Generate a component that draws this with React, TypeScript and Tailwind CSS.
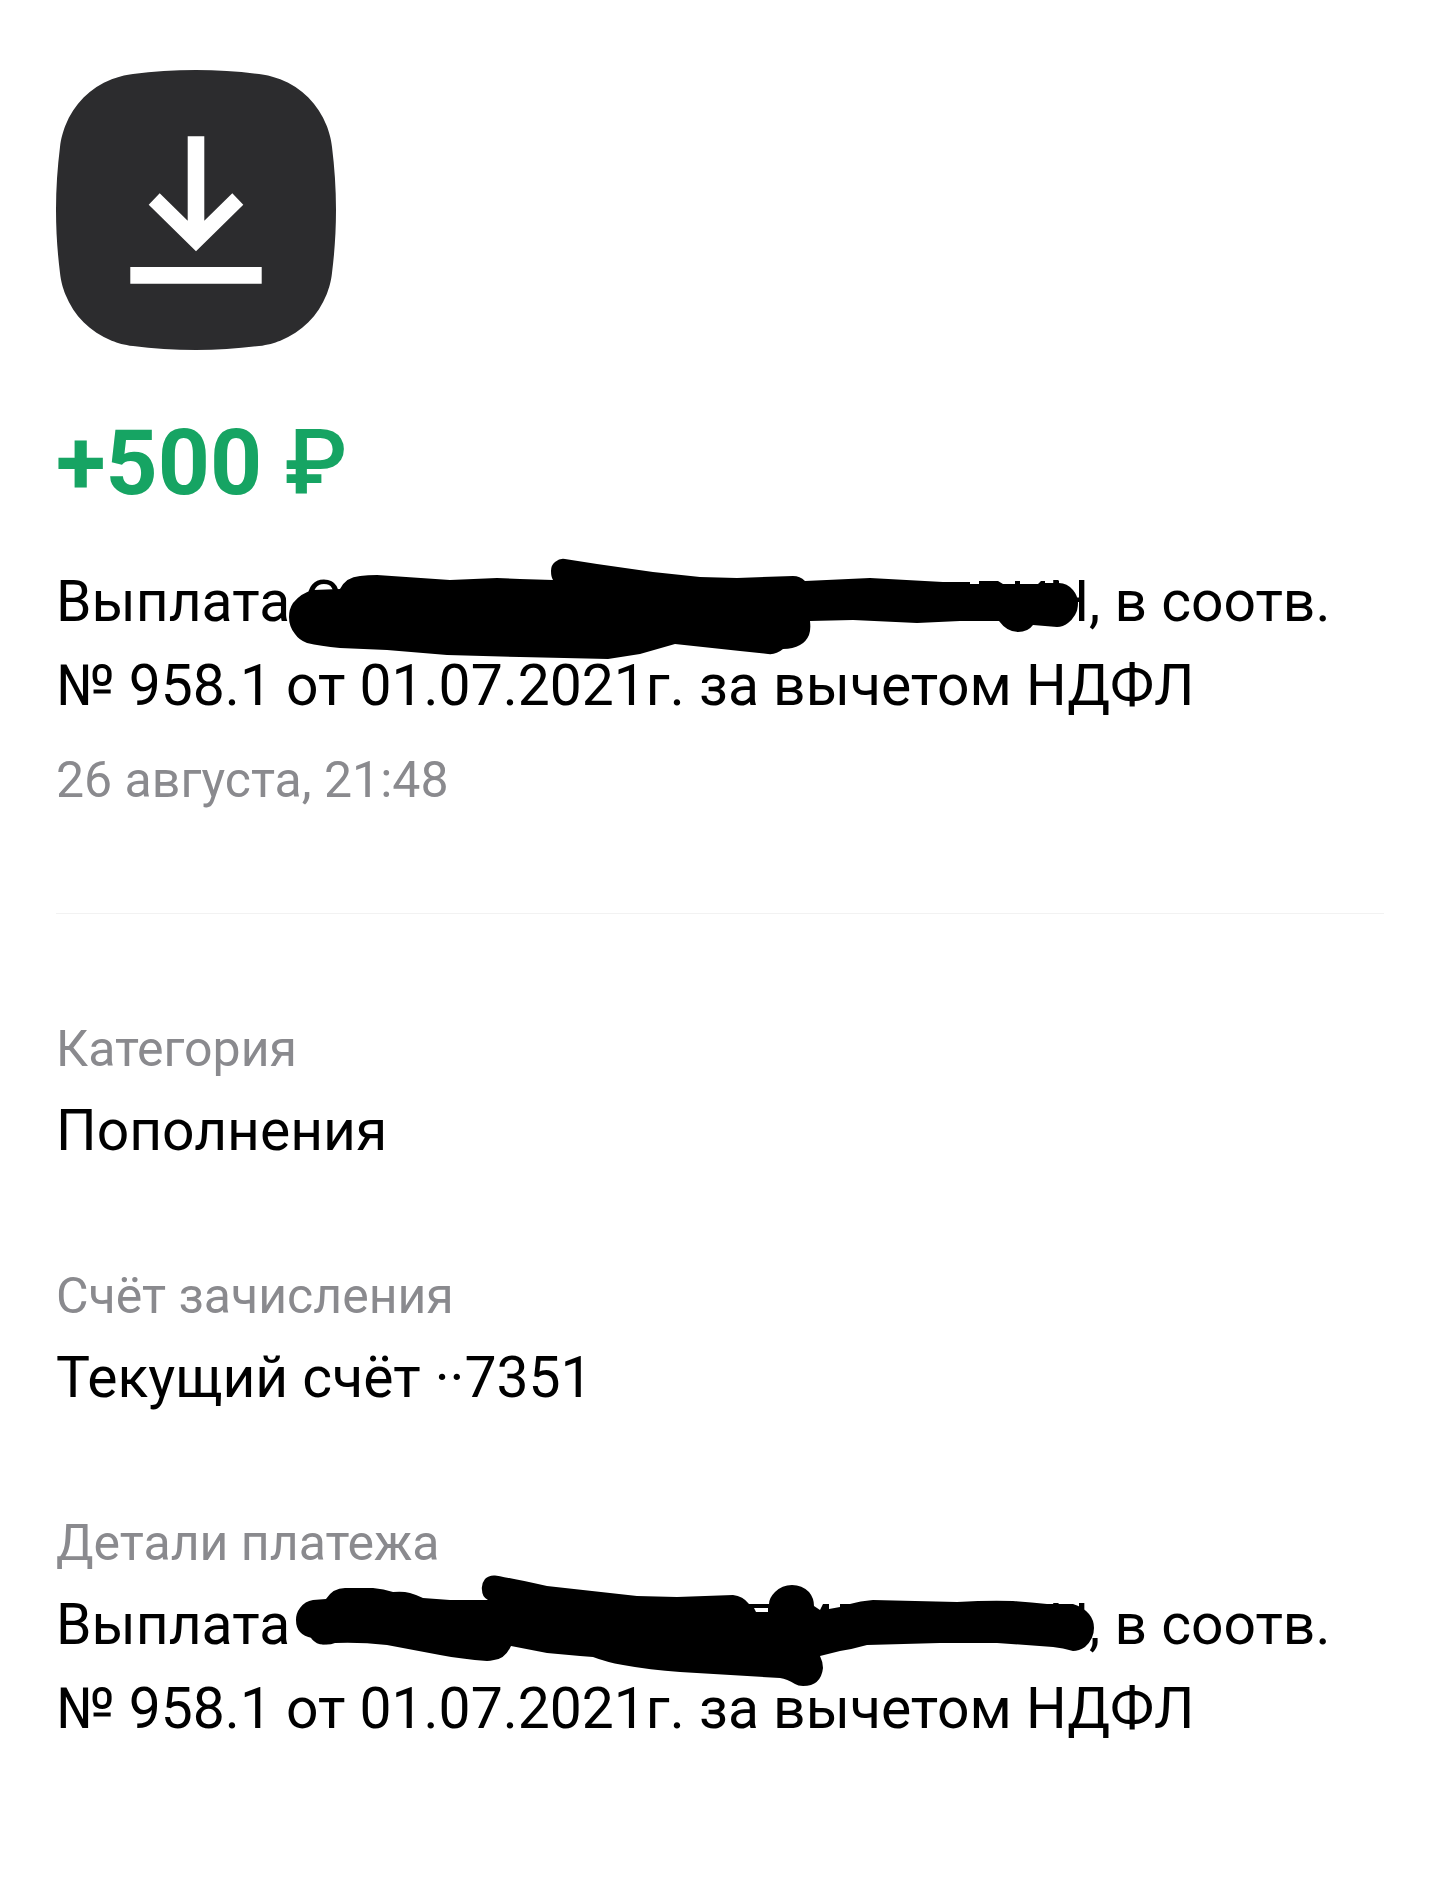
import type { ReactNode } from "react";

interface DetailRowProps {
    label: string;
    children: ReactNode;
}

function DownloadIcon() {
    return (
        <svg className="w-[280px] h-[280px]" viewBox="0 0 280 280" role="img" aria-label="Пополнение">
            <path
                fill="#2c2c2e"
                d="M140 0C162 0 183 1.5 203 4C212 5 218 7 224.3 9.3C246 18 262 34 270.7 55.7C273 62 275 68 276 77C278.5 97 280 118 280 140C280 162 278.5 183 276 203C275 212 273 218 270.7 224.3C262 246 246 262 224.3 270.7C218 273 212 275 203 276C183 278.5 162 280 140 280C118 280 97 278.5 77 276C68 275 62 273 55.7 270.7C34 262 18 246 9.3 224.3C7 218 5 212 4 203C1.5 183 0 162 0 140C0 118 1.5 97 4 77C5 68 7 62 9.3 55.7C18 34 34 18 55.7 9.3C62 7 68 5 77 4C97 1.5 118 0 140 0Z"
            />
            <path
                fill="#fff"
                d="M131.7 66.3H148.3V150.7L176.3 123.3L187.3 134.7L140 181.3L92.7 134.7L103.7 123.3L131.7 150.7ZM74.3 197H205.7V213.7H74.3Z"
            />
        </svg>
    );
}

// Закрашенное имя в заголовке операции
function HeaderScribble() {
    return (
        <svg className="absolute left-[233px] -top-0.5 w-[792px] h-[102px]" viewBox="289 558 792 102" aria-hidden="true">
            <path d="M289 617Q289 609 293 603Q301 593 313 590L340 589Q346 577 360 576Q368 575 377 575L450 580L497 578L520 579L553 580Q551 577 551 571Q551 565 555 562Q560 558 565 559L597 564L653 572L700 577L737 578L793 576Q800 576 805 581L870 578L943 582H970V584H979V581H998L1003 584H1015V581H1020V584H1038L1041 581H1045V583H1054V581H1059V583Q1067 583 1073 590Q1078 596 1078 603Q1078 610 1075 615Q1072 620 1068 623Q1063 627 1057 627L1033 625Q1028 632 1018 632Q1007 632 999 621H960L917 623L853 620L810 621Q811 630 809 635Q806 642 800 645Q793 649 783 649Q776 655 768 654L740 651L675 644L640 654L608 659L520 657L447 655L387 650L340 648Q320 646 307 643Q299 640 295 634Q289 627 289 617Z" />
        </svg>
    );
}

function DetailsScribble() {
    return (
        <svg className="absolute left-[240px] -top-2 w-[799px] h-[112px]" viewBox="296 1575 799 112" aria-hidden="true">
            <path
                fillRule="evenodd"
                d="M296 1620Q296 1613 300 1608Q305 1601 313 1600L326 1599Q333 1588 345 1588H373Q384 1589 393 1592Q403 1591 410 1593Q417 1595 423 1598L450 1600H488Q482 1597 482 1590Q481 1584 485 1579Q489 1575 495 1575.5Q500 1576 547 1586Q592 1591 637 1596L677 1597L733 1595Q743 1596 749 1604H769Q769 1598 775 1592Q782 1585 792 1585Q802 1585 809 1592Q814 1598 814 1606L820 1610L823 1604H829V1609L840 1607V1604H850Q860 1601 873 1600L957 1602Q990 1600 1013 1601Q1030 1602 1047 1604H1073Q1083 1607 1089 1614Q1094 1620 1094 1628Q1094 1639 1085 1647Q1079 1651 1073 1651Q1063 1648 1053 1647L997 1643H940L867 1645Q853 1649 840 1651L820 1656Q823 1662 823 1668Q821 1686 803 1686Q798 1686 795 1684Q787 1679 780 1678L680 1672Q650 1670 623 1665Q606 1662 593 1657L580 1656L547 1653L511 1646Q505 1659 494 1660Q490 1661 487 1661Q462 1659 440 1655L387 1645Q360 1642 335 1643Q327 1646 318 1643Q315 1641 312 1638Q296 1635 296 1620ZM754 1608L756 1612H768V1608Z"
            />
        </svg>
    );
}

function PaymentText({ children }: { children: ReactNode }) {
    return (
        <p className="relative text-[57px] leading-[84px] text-black">
            Выплата С<span className="inline-block w-[707px]" />Н, в соотв.
            <br />
            № 958.1 от 01.07.2021г. за вычетом НДФЛ
            {children}
        </p>
    );
}

function DetailRow({ label, children }: DetailRowProps) {
    return (
        <div>
            <dt className="mb-2 text-[50px] leading-16 text-[#8a8a8e]">{label}</dt>
            <dd className="text-[57px] leading-[84px] text-black">{children}</dd>
        </div>
    );
}

export default function App() {
    return (
        <main className="min-h-screen bg-white px-14 pt-[70px] pb-20 font-['Roboto',sans-serif] whitespace-nowrap overflow-hidden">
            <DownloadIcon />
            <h1 className="mt-[57px] text-[91px] leading-[112px] font-bold text-[#16a463]">
                +500 <span className="font-medium">₽</span>
            </h1>
            <div className="mt-[41px]">
                <PaymentText>
                    <HeaderScribble />
                </PaymentText>
            </div>
            <time className="mt-5 block text-[50px] leading-16 text-[#8a8a8e]">26 августа, 21:48</time>

            <hr className="mt-[101px] border-t border-[#f2f2f2]" />

            <dl className="mt-[103px] flex flex-col gap-[91px]">
                <DetailRow label="Категория">Пополнения</DetailRow>
                <DetailRow label="Счёт зачисления">Текущий счёт ··7351</DetailRow>
                <DetailRow label="Детали платежа">
                    <PaymentText>
                        <DetailsScribble />
                    </PaymentText>
                </DetailRow>
            </dl>
        </main>
    );
}
